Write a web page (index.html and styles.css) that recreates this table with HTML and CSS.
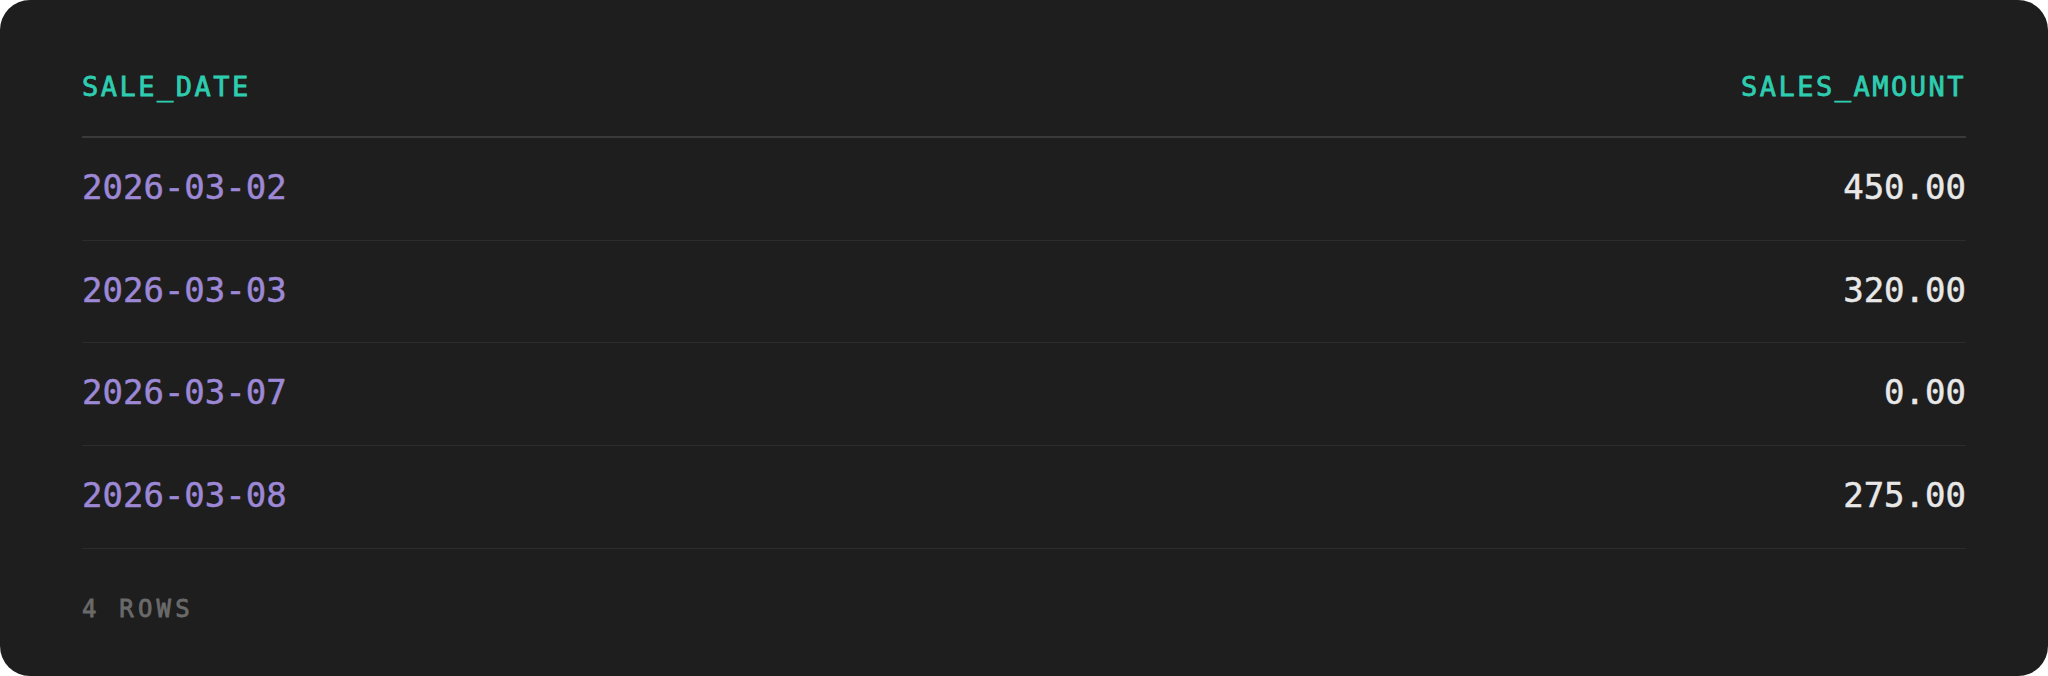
FILE: index.html
```html
<!DOCTYPE html>
<html lang="en">
<head>
    <meta charset="UTF-8">
    <meta name="viewport" content="width=device-width, initial-scale=1.0">
    <title>Query result</title>
    <link rel="stylesheet" href="styles.css">
</head>
<body>

    <!-- Result card -->
    <div class="card">
        <table class="result">
            <thead>
                <tr>
                    <th class="col-date">SALE_DATE</th>
                    <th class="col-num">SALES_AMOUNT</th>
                </tr>
            </thead>
            <tbody>
                <tr>
                    <td class="col-date">2026-03-02</td>
                    <td class="col-num">450.00</td>
                </tr>
                <tr>
                    <td class="col-date">2026-03-03</td>
                    <td class="col-num">320.00</td>
                </tr>
                <tr>
                    <td class="col-date">2026-03-07</td>
                    <td class="col-num">0.00</td>
                </tr>
                <tr>
                    <td class="col-date">2026-03-08</td>
                    <td class="col-num">275.00</td>
                </tr>
            </tbody>
        </table>

        <div class="row-count">4 ROWS</div>
    </div>

</body>
</html>
```

FILE: styles.css
```css
body {
    margin: 0;
    background-color: #fff;
    font-family: "DejaVu Sans Mono", "Liberation Mono", monospace;
}

.card {
    box-sizing: border-box;
    height: 676px;
    padding: 0 82px;
    background-color: #1e1e1e;
    border-radius: 30px;
}

.result {
    width: 100%;
    border-collapse: collapse;
}

.result th {
    padding: 73px 0 36px 0;
    font-size: 27px;
    line-height: 27px;
    font-weight: normal;
    -webkit-text-stroke: 0.8px currentColor; /* un peu plus gras que le regular */
    letter-spacing: 2.5px;
    color: #2ecdb0;
    border-bottom: 2px solid #3a3a3a;
}

.result td {
    padding: 32px 0 34px 0;
    font-size: 34px;
    line-height: 35.67px;
    -webkit-text-stroke: 0.5px currentColor;
    border-bottom: 1px solid #2c2c2c;
}

.col-date {
    text-align: left;
}

.col-num {
    text-align: right;
}

td.col-date {
    color: #9d88d6;
}

td.col-num {
    color: #e8e8e8;
}

.row-count {
    margin-top: 48px;
    font-size: 24px;
    line-height: 24px;
    font-weight: normal;
    -webkit-text-stroke: 0.8px currentColor;
    letter-spacing: 4.2px;
    color: #6a6a6a;
}
```
